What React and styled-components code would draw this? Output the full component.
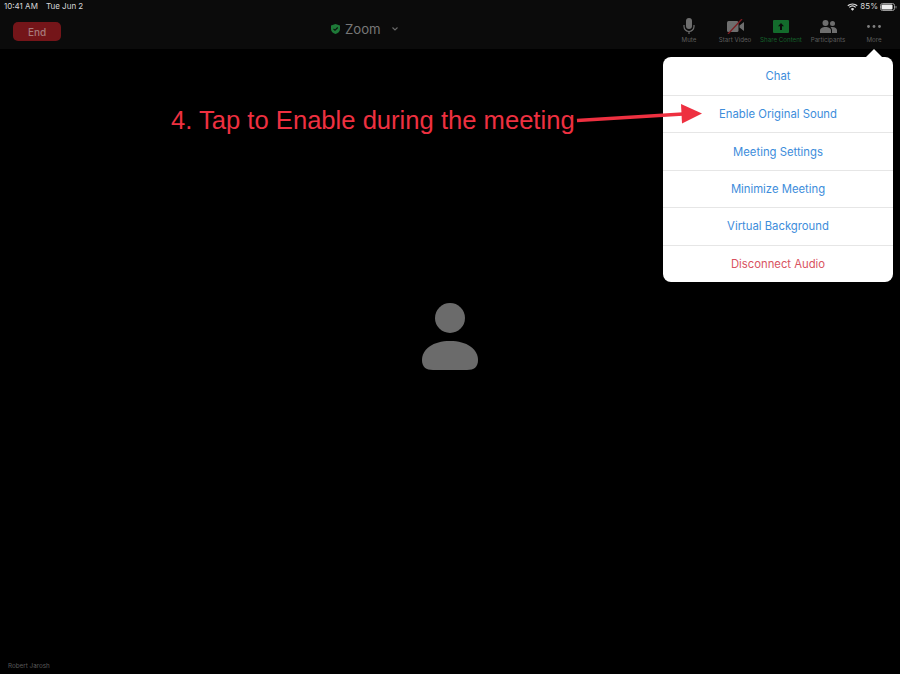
import React from "react";
import styled, { createGlobalStyle } from "styled-components";

const Global = createGlobalStyle`
  html, body { margin: 0; padding: 0; background: #000; }
  #root { width: 900px; height: 674px; overflow: hidden; }
`;
const Page = styled.div`
  position: relative; width: 900px; height: 674px; background: #000;
  display: flex; flex-direction: column; overflow: hidden;
  font-family: Inter, "Liberation Sans", sans-serif;
`;
const TopBar = styled.header`
  height: 49px; background: #0b0b0b; display: flex; flex-direction: column; flex: none;
`;
const StatusBar = styled.div`
  height: 13px; padding: 0 3px 0 4px; display: flex; justify-content: space-between; align-items: center;
  color: #d8d8d8; font-size: 8px; line-height: 13px;
`;
const StatusGroup = styled.div`display: flex; align-items: center; gap: ${p => p.$gap || 0}px;`;
const Toolbar = styled.div`
  flex: 1; display: grid; grid-template-columns: 318px auto 1fr; align-items: start; padding: 0 5px 0 13px;
`;
const EndButton = styled.div`
  width: 48px; height: 19px; margin-top: 9px; border-radius: 5px; background: #741519; color: #a77a7c;
  font-size: 10px; font-weight: 500; display: flex; align-items: center; justify-content: center;
`;
const Title = styled.div`
  display: flex; align-items: center; gap: 5px; color: #777; font-size: 13.2px; height: 33px; padding-bottom: 1px; box-sizing: border-box;
`;
const Tools = styled.div`display: flex; justify-content: flex-end;`;
const Tool = styled.div`
  width: ${p => p.$w}px; display: flex; flex-direction: column; align-items: center;
  color: ${p => p.$green ? "#14602a" : "#5e5e5e"}; font-size: 6.2px; line-height: 8px; white-space: nowrap;
`;
const ToolIcon = styled.div`height: 20px; margin-top: 3px; margin-bottom: 0; display: flex; align-items: center; justify-content: center;`;
const Stage = styled.main`
  flex: 1; display: flex; align-items: center; justify-content: center; padding-bottom: 49px;
`;
const Name = styled.div`
  position: absolute; left: 8px; bottom: 4px; color: #5a5a5a; font-size: 6.3px; line-height: 8px;
`;
const Popover = styled.nav`
  position: absolute; left: 663px; top: 57px; width: 230px; height: 225px; background: #fff; border-radius: 8px;
  display: grid; grid-template-rows: repeat(6, 1fr);
  &::before {
    content: ""; position: absolute; right: 11px; top: -8px; width: 16px; height: 8px; background: #fff;
    clip-path: polygon(50% 0, 100% 100%, 0 100%);
  }
`;
const Item = styled.div`
  box-sizing: border-box; min-height: 0;
  display: flex; align-items: center; justify-content: center; padding-top: ${p => p.$nudge ? 1 : 0}px;
  color: ${p => p.$danger ? "#d9535f" : "#3d8ddb"}; font-size: 11.3px;
  & + & { border-top: 1px solid #e6e6e6; }
`;
const Note = styled.div`
  position: absolute; left: 171px; top: 105px; color: #ee3040; font-family: "Liberation Sans", sans-serif; font-size: 25.6px; line-height: 30px; white-space: nowrap;
`;
const Arrow = styled.svg`position: absolute; left: 575px; top: 100px;`;

const Avatar = () => (
  <svg width="58" height="68" viewBox="0 0 58 68" fill="#6b6b6b">
    <circle cx="29" cy="15" r="15" />
    <path d="M29 38 C46 38 57 46 57 57 C57 64 53 67 46 67 L12 67 C5 67 1 64 1 57 C1 46 12 38 29 38 Z" />
  </svg>
);

export default function App() {
  return (
    <Page>
      <Global />
      <TopBar>
        <StatusBar>
          <StatusGroup $gap={8}><span>10:41 AM</span><span>Tue Jun 2</span></StatusGroup>
          <StatusGroup $gap={2}>
            <svg width="11" height="8" viewBox="0 0 11 8" fill="none" stroke="#e0e0e0" strokeWidth="1.2">
              <path d="M.8 2.8a7 7 0 0 1 9.4 0M2.3 4.4a4.8 4.8 0 0 1 6.4 0" />
              <path d="M5.5 7.8 3.8 5.9a2.5 2.5 0 0 1 3.4 0Z" fill="#e0e0e0" stroke="none" />
            </svg>
            <span>85%</span>
            <svg width="17" height="8" viewBox="0 0 17 8">
              <rect x=".5" y=".5" width="14" height="7" rx="2" fill="none" stroke="#999" />
              <rect x="1.5" y="1.5" width="11" height="5" rx="1" fill="#eee" />
              <rect x="15.5" y="3" width="1" height="2.4" fill="#888" />
            </svg>
          </StatusGroup>
        </StatusBar>
        <Toolbar>
          <div><EndButton>End</EndButton></div>
          <Title>
            <svg width="9" height="10" viewBox="0 0 9 10">
              <path d="M4.5 0 9 1.6V5c0 2.6-2 4.2-4.5 5C2 9.200 0 7.600 0 5V1.600Z" fill="#1e7a38" />
              <path d="M2.500 4.800 4 6.300 6.700 3.500" fill="none" stroke="#0b0b0b" strokeWidth="1.100" />
            </svg>
            <span>Zoom</span>
            <svg width="12" height="8" viewBox="0 0 12 8" fill="none" stroke="#6a6a6a" strokeWidth="1.100" style={{ marginLeft: 3 }}>
              <path d="M3.500 2.500 6 5l2.500-2.500" />
            </svg>
          </Title>
          <Tools>
            <Tool $w={44}>
              <ToolIcon>
                <svg width="12" height="17" viewBox="0 0 12 17">
                  <rect x="3" y="0" width="6" height="11" rx="3" fill="#6e6e6e" />
                  <path d="M1 7v1.500a5 5 0 0 0 10 0V7M6 13.500V16" fill="none" stroke="#6e6e6e" strokeWidth="1.200" />
                </svg>
              </ToolIcon>
              Mute
            </Tool>
            <Tool $w={48}>
              <ToolIcon>
                <svg width="17" height="15" viewBox="0 0 17 15">
                  <rect x="0" y="2" width="11.500" height="11" rx="1.500" fill="#6e6e6e" />
                  <path d="M12.500 6.500 17 3v9l-4.500-3.500Z" fill="#6e6e6e" />
                  <path d="M15 0 1 15" stroke="#7c1b20" strokeWidth="1.300" />
                </svg>
              </ToolIcon>
              Start Video
            </Tool>
            <Tool $w={44} $green>
              <ToolIcon>
                <svg width="16" height="13" viewBox="0 0 16 13">
                  <rect width="16" height="13" rx="1" fill="#136c2c" />
                  <path d="M8 3 11 6.300H9V10H7V6.300H5Z" fill="#0b0b0b" />
                </svg>
              </ToolIcon>
              Share Content
            </Tool>
            <Tool $w={50}>
              <ToolIcon>
                <svg width="17" height="13" viewBox="0 0 17 13" fill="#6e6e6e">
                  <circle cx="5.500" cy="3" r="3" />
                  <circle cx="12.500" cy="3.500" r="2.500" />
                  <path d="M0 13V10.500C0 8.500 2.500 7 5.500 7s5.500 1.500 5.500 3.500V13Z" />
                  <path d="M12 13V10.500C12 9 11.500 8 10.500 7.200 11 7 11.800 7 12.500 7 15 7 17 8.300 17 10.200V13Z" />
                </svg>
              </ToolIcon>
              Participants
            </Tool>
            <Tool $w={42}>
              <ToolIcon>
                <svg width="14" height="3" viewBox="0 0 14 3" fill="#808080">
                  <circle cx="1.500" cy="1.500" r="1.400" /><circle cx="7" cy="1.500" r="1.400" /><circle cx="12.500" cy="1.500" r="1.400" />
                </svg>
              </ToolIcon>
              More
            </Tool>
          </Tools>
        </Toolbar>
      </TopBar>
      <Stage><Avatar /></Stage>
      <Name>Robert Jarosh</Name>
      <Popover>
        <Item $nudge>Chat</Item>
        <Item $nudge>Enable Original Sound</Item>
        <Item $nudge>Meeting Settings</Item>
        <Item>Minimize Meeting</Item>
        <Item>Virtual Background</Item>
        <Item $danger>Disconnect Audio</Item>
      </Popover>
      <Note>4. Tap to Enable during the meeting</Note>
      <Arrow width="130" height="30" viewBox="0 0 130 30">
        <path d="M2 20.500 L108 14" stroke="#ee3040" strokeWidth="3.500" fill="none" />
        <path d="M106 4 L127 13.500 L107 23.500 Z" fill="#ee3040" />
      </Arrow>
    </Page>
  );
}
